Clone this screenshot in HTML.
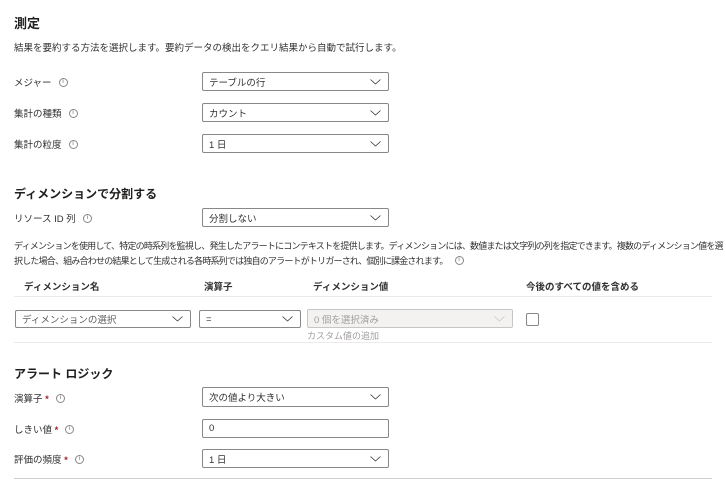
<!DOCTYPE html><html><head><meta charset="utf-8"><style>
*{margin:0;padding:0;box-sizing:border-box}
body{width:726px;height:482px;background:#fff;font-family:"Liberation Sans","Noto Sans CJK JP",sans-serif;color:#323130;position:relative;overflow:hidden}
.a{position:absolute;white-space:nowrap}
.h{font-weight:bold;font-size:12px;color:#201f1e}
.t{font-size:9.5px}
.lb{font-size:9.5px;color:#323130}
.i{display:inline-block;width:9px;height:9px;border:1px solid #8a8886;border-radius:50%;font-size:6px;line-height:7px;text-align:center;color:#605e5c;vertical-align:middle;margin-left:7px;position:relative;top:-1px;letter-spacing:0}
.st{color:#a4262c;font-weight:bold}
.b{position:absolute;border:1px solid #8a8886;border-radius:2px;background:#fff;font-size:9.5px;padding-left:6px;display:flex;align-items:center}
.b svg{position:absolute;right:7px;top:50%;margin-top:-3px}
.dis{background:#f3f2f1;border-color:#c8c6c4;color:#a19f9d}
.ln{position:absolute;left:14px;width:698px;height:1px;background:#edebe9}
.th{font-size:9.5px;font-weight:bold;color:#323130}
</style></head><body>
<div class="a h" style="left:14px;top:13px;font-size:13px">測定</div>
<div class="a t" style="left:14px;top:40px">結果を要約する方法を選択します。要約データの検出をクエリ結果から自動で試行します。</div>

<div class="a lb" style="left:14px;top:75px">メジャー<span class="i">i</span></div>
<div class="b" style="left:202px;top:72px;width:187px;height:19px">テーブルの行<svg width="11" height="6"><path d="M0.5 0.5L5.5 5L10.5 0.5" fill="none" stroke="#323130" stroke-width="0.8"/></svg></div>
<div class="a lb" style="left:14px;top:106px">集計の種類<span class="i">i</span></div>
<div class="b" style="left:202px;top:103px;width:187px;height:19px">カウント<svg width="11" height="6"><path d="M0.5 0.5L5.5 5L10.5 0.5" fill="none" stroke="#323130" stroke-width="0.8"/></svg></div>
<div class="a lb" style="left:14px;top:137px">集計の粒度<span class="i">i</span></div>
<div class="b" style="left:202px;top:134px;width:187px;height:19px">1 日<svg width="11" height="6"><path d="M0.5 0.5L5.5 5L10.5 0.5" fill="none" stroke="#323130" stroke-width="0.8"/></svg></div>

<div class="a h" style="left:14px;top:185px">ディメンションで分割する</div>
<div class="a lb" style="left:14px;top:211px">リソース ID 列<span class="i">i</span></div>
<div class="b" style="left:202px;top:208px;width:187px;height:19px">分割しない<svg width="11" height="6"><path d="M0.5 0.5L5.5 5L10.5 0.5" fill="none" stroke="#323130" stroke-width="0.8"/></svg></div>
<div class="a" style="left:14px;top:239px;font-size:9px;letter-spacing:-0.8px;line-height:15px;white-space:normal;width:711px">ディメンションを使用して、特定の時系列を監視し、発生したアラートにコンテキストを提供します。ディメンションには、数値または文字列の列を指定できます。複数のディメンション値を選択した場合、組み合わせの結果として生成される各時系列では独自のアラートがトリガーされ、個別に課金されます。<span class="i">i</span></div>

<div class="a th" style="left:24px;top:279px">ディメンション名</div>
<div class="a th" style="left:204px;top:279px">演算子</div>
<div class="a th" style="left:313px;top:279px">ディメンション値</div>
<div class="a th" style="left:526px;top:279px">今後のすべての値を含める</div>
<div class="ln" style="top:296px"></div>
<div class="b" style="left:15px;top:310px;width:176px;height:18px;color:#605e5c">ディメンションの選択<svg width="11" height="6"><path d="M0.5 0.5L5.5 5L10.5 0.5" fill="none" stroke="#323130" stroke-width="0.8"/></svg></div>
<div class="b" style="left:199px;top:310px;width:102px;height:18px">=<svg width="11" height="6"><path d="M0.5 0.5L5.5 5L10.5 0.5" fill="none" stroke="#323130" stroke-width="0.8"/></svg></div>
<div class="b dis" style="left:307px;top:309px;width:206px;height:19px">0 個を選択済み<svg width="11" height="6"><path d="M0.5 0.5L5.5 5L10.5 0.5" fill="none" stroke="#c8c6c4" stroke-width="0.8"/></svg></div>
<div class="a" style="left:526px;top:313px;width:13px;height:13px;border:1px solid #8a8886;border-radius:2px"></div>
<div class="a" style="left:307px;top:329px;font-size:9px;color:#a19f9d">カスタム値の追加</div>
<div class="ln" style="top:342px"></div>

<div class="a h" style="left:14px;top:365px">アラート ロジック</div>
<div class="a lb" style="left:14px;top:391px">演算子 <span class="st">*</span><span class="i">i</span></div>
<div class="b" style="left:202px;top:387px;width:187px;height:20px">次の値より大きい<svg width="11" height="6"><path d="M0.5 0.5L5.5 5L10.5 0.5" fill="none" stroke="#323130" stroke-width="0.8"/></svg></div>
<div class="a lb" style="left:14px;top:422px">しきい値 <span class="st">*</span><span class="i">i</span></div>
<div class="b" style="left:202px;top:419px;width:187px;height:19px">0</div>
<div class="a lb" style="left:14px;top:452px">評価の頻度 <span class="st">*</span><span class="i">i</span></div>
<div class="b" style="left:202px;top:449px;width:187px;height:19px">1 日<svg width="11" height="6"><path d="M0.5 0.5L5.5 5L10.5 0.5" fill="none" stroke="#323130" stroke-width="0.8"/></svg></div>
<div class="ln" style="top:478px;background:#d2d0ce"></div>
</body></html>
